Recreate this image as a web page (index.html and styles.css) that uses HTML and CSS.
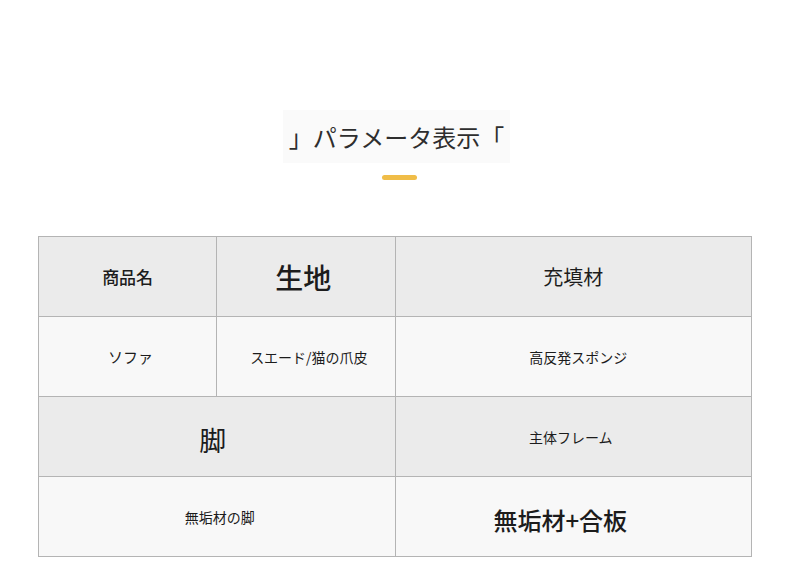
FILE: index.html
```html
<!DOCTYPE html>
<html lang="ja">
<head>
<meta charset="utf-8">
<link rel="stylesheet" href="styles.css">
</head>
<body>
<div class="page">
  <div class="heading">
    <h2 class="title">」パラメータ表示「</h2>
    <div class="bar"></div>
  </div>
  <table class="spec">
    <colgroup>
      <col class="c1"><col class="c2"><col class="c3">
    </colgroup>
    <tr class="head">
      <td class="t17">商品名</td>
      <td class="t28 nudge-l">生地</td>
      <td class="t20">充填材</td>
    </tr>
    <tr class="body">
      <td class="t15 nudge-r">ソファ</td>
      <td class="t14 nudge-r">スエード/猫の爪皮</td>
      <td class="t14 nudge-r2">高反発スポンジ</td>
    </tr>
    <tr class="head">
      <td colspan="2" class="t27 nudge-leg">脚</td>
      <td class="t14 nudge-l">主体フレーム</td>
    </tr>
    <tr class="body">
      <td colspan="2" class="t14 nudge-r">無垢材の脚</td>
      <td class="t24 nudge-wood">無垢材+合板</td>
    </tr>
  </table>
</div>
</body>
</html>
```
FILE: styles.css
```css
html, body {
  margin: 0;
  padding: 0;
  background: #ffffff;
}
body {
  font-family: "Noto Sans CJK JP", "Noto Sans", sans-serif;
  color: #222;
}
.page {
  width: 790px;
  padding-top: 110px;
}
.heading {
  display: flex;
  flex-direction: column;
  align-items: center;
}
.title {
  margin: 0 0 0 3px;
  padding: 0 6px;
  height: 53px;
  line-height: 53px;
  font-size: 24px;
  font-weight: 400;
  color: #2e2e2e;
  background: #fafafa;
}
.bar {
  margin: 12px 0 0 9px;
  width: 35px;
  height: 5px;
  border-radius: 3px;
  background: #f0bd48;
}
.spec {
  margin: 56px 0 0 38px;
  border-collapse: collapse;
  table-layout: fixed;
  width: 714px;
}
.c1, .c2 { width: 178px; }
.c3 { width: 356px; }
.spec tr { height: 80px; }
.spec td {
  border: 1px solid #b4b4b4;
  padding: 0;
  text-align: center;
  vertical-align: middle;
  color: #1c1c1c;
}
.head td { background: #ebebeb; }
.body td { background: #f8f8f8; }
.t14 { font-size: 14px; }
.t15 { font-size: 15px; }
.t17 { font-size: 17px; font-weight: 500; }
.t20 { font-size: 20px; }
.t24 { font-size: 24px; font-weight: 500; }
.t27 { font-size: 27px; }
.t28 { font-size: 28px; font-weight: 500; }
.spec td.nudge-l { padding-right: 5px; }
.spec td.nudge-r { padding-left: 6px; }
.spec td.nudge-r2 { padding-left: 10px; }
.spec td.nudge-leg { padding: 5px 8px 0 0; }
.spec td.nudge-wood { padding: 5px 26px 0 0; }
```
